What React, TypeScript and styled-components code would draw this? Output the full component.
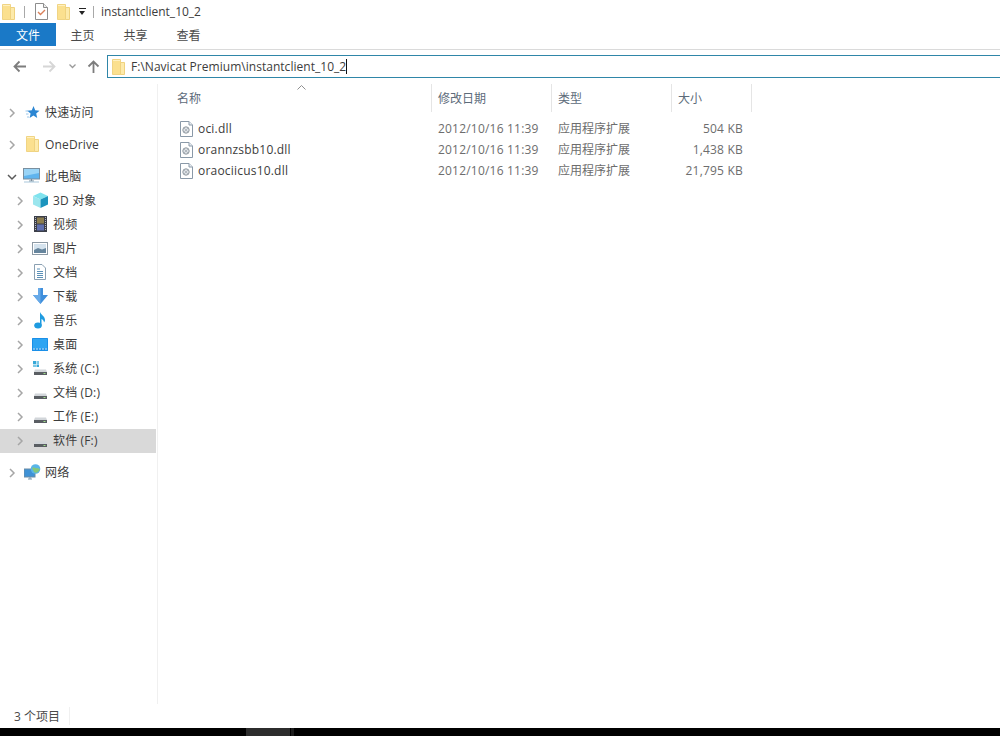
import React from "react";
import styled, { createGlobalStyle } from "styled-components";

const GlobalStyle = createGlobalStyle`
  html, body {
    margin: 0;
    padding: 0;
    background: #fff;
  }
  * {
    box-sizing: border-box;
  }
`;

const FONT = `"Open Sans", "Noto Sans CJK SC", sans-serif`;

const Folder = () => (
  <svg width="13" height="16" viewBox="0 0 13 16">
    <path d="M.5.5h8v15h-8z" fill="#fbe08f" stroke="#f0d484" />
    <path d="M8.500 3.500h4v12h-4z" fill="#fdeaaa" stroke="#efd27f" />
    <path d="M1 1h7v1H1z" fill="#fff0bf" />
  </svg>
);

const Chevron = ({ open }: { open?: boolean }) => (
  <svg width="10" height="10" viewBox="0 0 10 10">
    <path
      d={open ? "M1 3l4 4 4-4" : "M3 1l4 4-4 4"}
      fill="none"
      stroke={open ? "#5a5a5a" : "#a6a6a6"}
      strokeWidth="1.5"
    />
  </svg>
);

const Arrow = ({ dir, color }: { dir: "left" | "right" | "up"; color: string }) => {
  const d =
    dir === "left"
      ? "M13 6.500H1.500M6.500 1.500l-5 5 5 5"
      : dir === "right"
        ? "M0 6.500h11.500M6.500 1.500l5 5-5 5"
        : "M6.500 13V1.500M1.500 6.500l5-5 5 5";
  return (
    <svg width="13" height="13" viewBox="0 0 13 13">
      <path d={d} fill="none" stroke={color} strokeWidth="1.800" />
    </svg>
  );
};

const CheckDoc = () => (
  <svg width="13" height="17" viewBox="0 0 13 17">
    <path d="M.5.5h8l4 4v12H.5z" fill="#fff" stroke="#8d8d8d" />
    <path d="M8.500.5v4h4" fill="#eee" stroke="#8d8d8d" />
    <path d="M3 9l2.500 2.500L10 7" fill="none" stroke="#d9805a" strokeWidth="1.400" />
  </svg>
);

const DllIcon = () => (
  <svg width="13" height="16" viewBox="0 0 13 16">
    <path d="M.5.5h8.500l3.500 3.500v11.500H.5z" fill="#fff" stroke="#8a99a8" />
    <path d="M9 .5V4h3.500" fill="#e8edf2" stroke="#8a99a8" />
    <circle cx="6" cy="9" r="3.200" fill="#dfe3e7" stroke="#8f98a0" />
    <path d="M4 7l4 4M4 11l4-4" stroke="#a7afb6" strokeWidth=".8" />
  </svg>
);

const StarIcon = () => (
  <svg width="15" height="15" viewBox="0 0 15 15">
    <path d="M8.500 1l1.700 4.300 4.300.4-3.300 2.900 1 4.400-3.800-2.400L4.600 13l1-4.400L2.200 5.700l4.600-.4z" fill="#2b86d3" />
    <path d="M.5 6h3M1 9h2.500M2 12h2" stroke="#9ac6ea" strokeWidth="1" />
  </svg>
);

const PcIcon = () => (
  <svg width="18" height="16" viewBox="0 0 18 16">
    <rect x=".5" y=".5" width="16" height="10.500" fill="#5fb4ee" stroke="#7a8f9f" />
    <path d="M1 1h15v4L1 8z" fill="#9ad4f6" />
    <path d="M6 13h5M8.500 11v2" stroke="#7a8f9f" strokeWidth="1.200" />
    <path d="M1 14h15" stroke="#a9c7db" strokeWidth="1" />
  </svg>
);

const CubeIcon = () => (
  <svg width="17" height="17" viewBox="0 0 17 17">
    <path d="M1 4l7.500-3.500L16 4l-7.500 3.500z" fill="#7fe3ee" />
    <path d="M1 4l7.500 3.500V16L1 12.500z" fill="#9be6ee" />
    <path d="M16 4L8.500 7.500V16L16 12.500z" fill="#1b94bd" />
  </svg>
);

const FilmIcon = () => (
  <svg width="13" height="16" viewBox="0 0 13 16">
    <rect width="13" height="16" fill="#3c3f49" />
    <rect x="3" y="1.500" width="7" height="6" fill="#8b7d4f" />
    <rect x="3" y="8.500" width="7" height="6" fill="#5f6fb0" />
    <path d="M1.500 1v14M11.500 1v14" stroke="#b9bcc4" strokeWidth="1" strokeDasharray="1 1" />
  </svg>
);

const PictureIcon = () => (
  <svg width="16" height="13" viewBox="0 0 16 13">
    <rect x=".5" y=".5" width="15" height="12" fill="#fff" stroke="#8d9aa5" />
    <rect x="2" y="2" width="12" height="9" fill="#d5e3ee" />
    <path d="M2 8l4-2 4 1.500L14 6v5H2z" fill="#66859d" />
  </svg>
);

const DocIcon = () => (
  <svg width="12" height="16" viewBox="0 0 12 16">
    <path d="M.5.5H8L11.500 4v11.500H.5z" fill="#fff" stroke="#8aa0b2" />
    <path d="M3 5h3M3 7.500h6M3 9.500h6M3 11.500h6M3 13.500h6" stroke="#5b91b8" strokeWidth="1" />
  </svg>
);

const DownloadIcon = () => (
  <svg width="15" height="16" viewBox="0 0 15 16">
    <path d="M5 0h5v7h5l-7.500 9L0 7h5z" fill="#3f8fdc" />
    <path d="M5 0h2.500v16L0 7h5z" fill="#68aae8" />
  </svg>
);

const MusicIcon = () => (
  <svg width="12" height="18" viewBox="0 0 12 18">
    <ellipse cx="4" cy="14.500" rx="3.800" ry="3" fill="#1f9be0" />
    <path d="M6 14.500V1c1 3 5 4 5 8 0 1-.5 2-1 2.500 0-2-2-3.500-2.500-3.500v6.500z" fill="#1f9be0" />
  </svg>
);

const DesktopIcon = () => (
  <svg width="16" height="13" viewBox="0 0 16 13">
    <rect width="16" height="13" rx=".5" fill="#1a8fe8" />
    <rect x="1" y="1" width="14" height="9.500" fill="#2fa5f2" />
    <path d="M1 11h14" stroke="#cfe6f7" strokeWidth="1" strokeDasharray="2 1" />
  </svg>
);

const DriveIcon = ({ system }: { system?: boolean }) => (
  <svg width="15" height="15" viewBox="0 0 15 15">
    {system && (
      <>
        <rect x="0" y="0" width="3" height="3" fill="#35a8d8" />
        <rect x="3.500" y="0" width="2.500" height="3" fill="#7cc8e6" />
        <rect x="0" y="3.500" width="3" height="2.500" fill="#7cc8e6" />
        <rect x="3.500" y="3.500" width="2.500" height="2.500" fill="#35a8d8" />
      </>
    )}
    <path d="M2 8.500h11l1 2.500H1z" fill="#d2d6da" />
    <rect x="1" y="11" width="13" height="3" fill="#5a5e63" />
    <rect x="10.500" y="12" width="2" height="1" fill="#9fe08a" />
  </svg>
);

const NetIcon = () => (
  <svg width="17" height="16" viewBox="0 0 17 16">
    <rect x="0" y="5" width="11" height="8" fill="#3f92d6" stroke="#6b8ca6" />
    <path d="M4 15h4M6 13v2" stroke="#7b99ae" strokeWidth="1" />
    <circle cx="11.500" cy="5" r="4.800" fill="#58b4e8" />
    <path d="M8 4c2-2 3 1 5 0 1 0 2 1 3 1-1 3-4 5-6 3z" fill="#84c77c" />
  </svg>
);

type NavEntry = {
  label: string;
  icon: React.ReactNode;
  child?: boolean;
  open?: boolean;
  selected?: boolean;
  gapBefore?: boolean;
};

const NAV: NavEntry[] = [
  { label: "快速访问", icon: <StarIcon /> },
  { label: "OneDrive", icon: <Folder />, gapBefore: true },
  { label: "此电脑", icon: <PcIcon />, open: true, gapBefore: true },
  { label: "3D 对象", icon: <CubeIcon />, child: true },
  { label: "视频", icon: <FilmIcon />, child: true },
  { label: "图片", icon: <PictureIcon />, child: true },
  { label: "文档", icon: <DocIcon />, child: true },
  { label: "下载", icon: <DownloadIcon />, child: true },
  { label: "音乐", icon: <MusicIcon />, child: true },
  { label: "桌面", icon: <DesktopIcon />, child: true },
  { label: "系统 (C:)", icon: <DriveIcon system />, child: true },
  { label: "文档 (D:)", icon: <DriveIcon />, child: true },
  { label: "工作 (E:)", icon: <DriveIcon />, child: true },
  { label: "软件 (F:)", icon: <DriveIcon />, child: true, selected: true },
  { label: "网络", icon: <NetIcon />, gapBefore: true },
];

const FILES = [
  { name: "oci.dll", size: "504 KB" },
  { name: "orannzsbb10.dll", size: "1,438 KB" },
  { name: "oraociicus10.dll", size: "21,795 KB" },
];

const App = () => {
  return (
    <>
      <GlobalStyle />
      <Window>
        <TitleBar>
          <Folder />
          <QuickSep />
          <CheckSlot>
            <CheckDoc />
          </CheckSlot>
          <Folder />
          <DropGlyph />
          <QuickSep />
          <TitleText>instantclient_10_2</TitleText>
        </TitleBar>

        <Tabs>
          <FileTab>文件</FileTab>
          <Tab>主页</Tab>
          <Tab>共享</Tab>
          <Tab>查看</Tab>
        </Tabs>

        <AddressRow>
          <NavButtons>
            <NavSlot $ml={0}>
              <Arrow dir="left" color="#7d7d7d" />
            </NavSlot>
            <NavSlot $ml={17}>
              <Arrow dir="right" color="#d6d6d6" />
            </NavSlot>
            <NavSlot $ml={13}>
              <svg width="7" height="5" viewBox="0 0 7 5">
                <path d="M.5.5l3 3 3-3" fill="none" stroke="#9a9a9a" strokeWidth="1.300" />
              </svg>
            </NavSlot>
            <NavSlot $ml={11}>
              <Arrow dir="up" color="#7d7d7d" />
            </NavSlot>
          </NavButtons>
          <AddressBox>
            <Folder />
            <AddressText>F:\Navicat Premium\instantclient_10_2</AddressText>
            <Caret />
          </AddressBox>
        </AddressRow>

        <Main>
          <Sidebar>
            {NAV.map((item) => (
              <NavRow key={item.label} $selected={item.selected} $gap={item.gapBefore}>
                <NavChevron $child={item.child}>
                  <Chevron open={item.open} />
                </NavChevron>
                <NavIcon $child={item.child}>{item.icon}</NavIcon>
                <NavLabel>{item.label}</NavLabel>
              </NavRow>
            ))}
          </Sidebar>

          <Content>
            <SortCaret>
              <svg width="9" height="5" viewBox="0 0 9 5">
                <path d="M.5 4.500l4-4 4 4" fill="none" stroke="#8f8f8f" strokeWidth="1" />
              </svg>
            </SortCaret>
            <Header>
              <HeadCell $w={273} $pad={18}>名称</HeadCell>
              <HeadCell $w={120}>修改日期</HeadCell>
              <HeadCell $w={120}>类型</HeadCell>
              <HeadCell $w={80}>大小</HeadCell>
            </Header>
            <FileList>
              {FILES.map((f) => (
                <FileRow key={f.name}>
                  <NameCell>
                    <DllIcon />
                    <FileName>{f.name}</FileName>
                  </NameCell>
                  <MutedCell $w={120}>2012/10/16 11:39</MutedCell>
                  <TypeCell $w={120}>应用程序扩展</TypeCell>
                  <SizeCell>{f.size}</SizeCell>
                </FileRow>
              ))}
            </FileList>
          </Content>
        </Main>

        <StatusBar>
          <StatusText>3 个项目</StatusText>
        </StatusBar>
        <Taskbar>
          <TaskChunk />
          <TaskSliver />
        </Taskbar>
      </Window>
    </>
  );
};

export default App;

const Window = styled.div`
  width: 1000px;
  height: 736px;
  overflow: hidden;
  display: flex;
  flex-direction: column;
  background: #fff;
  font-family: ${FONT};
  font-size: 12px;
  color: #3a3a3a;
`;

const TitleBar = styled.div`
  height: 23px;
  flex: none;
  display: flex;
  align-items: center;
  padding-left: 2px;
  gap: 9px;
`;

const QuickSep = styled.span`
  width: 1px;
  height: 12px;
  background: #a8a8a8;
`;

const CheckSlot = styled.span`
  display: flex;
  margin-left: 1px;
`;

const DropGlyph = styled.span`
  width: 7px;
  height: 7px;
  margin-right: -2px;
  border-top: 1px solid #222;
  position: relative;
  &::after {
    content: "";
    position: absolute;
    left: 0;
    top: 2px;
    border-left: 3.5px solid transparent;
    border-right: 3.5px solid transparent;
    border-top: 4px solid #222;
  }
`;

const TitleText = styled.span`
  font-size: 12px;
  color: #3c3c3c;
  margin-left: -2px;
`;

const Tabs = styled.div`
  height: 23px;
  flex: none;
  display: flex;
  align-items: stretch;
`;

const FileTab = styled.div`
  width: 56px;
  background: #1a79c7;
  color: #fff;
  display: flex;
  align-items: center;
  justify-content: center;
  font-size: 12px;
`;

const Tab = styled.div`
  width: 53px;
  display: flex;
  align-items: center;
  justify-content: center;
  font-size: 12px;
  color: #4a4a4a;
`;

const AddressRow = styled.div`
  height: 35px;
  flex: none;
  margin-top: 3px;
  border-top: 1px solid #dadada;
  display: flex;
  align-items: flex-start;
  padding-top: 5px;
`;

const NavButtons = styled.div`
  width: 107px;
  height: 22px;
  flex: none;
  display: flex;
  align-items: center;
  padding-left: 13px;
`;

const NavSlot = styled.span<{ $ml: number }>`
  display: flex;
  margin-left: ${(p) => p.$ml}px;
`;

const AddressBox = styled.div`
  flex: 1;
  height: 23px;
  border: 1px solid #2f86a8;
  border-right: none;
  display: flex;
  align-items: center;
  padding-left: 4px;
`;

const AddressText = styled.span`
  margin-left: 6px;
  font-size: 12px;
  letter-spacing: 0.03px;
  color: #3c3c3c;
  white-space: nowrap;
`;

const Caret = styled.span`
  width: 1px;
  height: 15px;
  background: #111;
`;

const Main = styled.div`
  flex: 1;
  display: flex;
  min-height: 0;
`;

const Sidebar = styled.div`
  width: 158px;
  flex: none;
  padding: 17px 1px 0 0;
  border-right: 1px solid #f0f0f0;
  margin-bottom: 1px;
`;

const NavRow = styled.div<{ $selected?: boolean; $gap?: boolean }>`
  height: 24px;
  display: flex;
  align-items: center;
  margin-top: ${(p) => (p.$gap ? "8px" : "0")};
  background: ${(p) => (p.$selected ? "#d9d9d9" : "transparent")};
`;

const NavChevron = styled.span<{ $child?: boolean }>`
  display: flex;
  margin-left: ${(p) => (p.$child ? "15px" : "7px")};
  width: 10px;
`;

const NavIcon = styled.span<{ $child?: boolean }>`
  width: 18px;
  height: 18px;
  margin-left: 6px;
  margin-bottom: 2px;
  display: flex;
  align-items: center;
  justify-content: center;
`;

const NavLabel = styled.span`
  margin-left: 4px;
  margin-bottom: 2px;
  font-size: 12px;
  letter-spacing: 0.15px;
  color: #3c3c3c;
  white-space: nowrap;
`;

const Content = styled.div`
  flex: 1;
  position: relative;
  min-width: 0;
  padding-left: 1px;
`;

const SortCaret = styled.span`
  position: absolute;
  left: 139px;
  top: 1px;
  display: flex;
`;

const Header = styled.div`
  height: 28px;
  display: flex;
`;

const HeadCell = styled.div<{ $w: number; $pad?: number }>`
  width: ${(p) => p.$w}px;
  padding-left: ${(p) => p.$pad ?? 6}px;
  display: flex;
  align-items: center;
  border-right: 1px solid #e5e5e5;
  font-size: 12px;
  color: #5d6b7a;
`;

const FileList = styled.div`
  padding-top: 6px;
`;

const FileRow = styled.div`
  height: 21px;
  display: flex;
  align-items: center;
`;

const NameCell = styled.div`
  width: 273px;
  padding-left: 21px;
  display: flex;
  align-items: center;
  gap: 5px;
`;

const FileName = styled.span`
  font-size: 12px;
  letter-spacing: 0.2px;
  color: #3c3c3c;
`;

const MutedCell = styled.div<{ $w: number }>`
  width: ${(p) => p.$w}px;
  padding-left: 6px;
  font-size: 12px;
  letter-spacing: 0.2px;
  color: #6d6d6d;
  white-space: nowrap;
`;

const TypeCell = styled(MutedCell)`
  margin-bottom: 2px;
  letter-spacing: 0;
`;

const SizeCell = styled.div`
  width: 71px;
  text-align: right;
  font-size: 12px;
  letter-spacing: 0.2px;
  color: #6d6d6d;
  white-space: nowrap;
`;

const StatusBar = styled.div`
  height: 23px;
  flex: none;
  display: flex;
  align-items: center;
  padding: 0 0 1px 14px;
`;

const StatusText = styled.span`
  font-size: 12px;
  color: #4a4a4a;
  padding-right: 9px;
  border-right: 1px solid #f0f0f0;
`;

const Taskbar = styled.div`
  height: 8px;
  flex: none;
  background: #000;
  display: flex;
  padding-left: 246px;
`;

const TaskChunk = styled.div`
  width: 44px;
  background: #2c2c2c;
`;

const TaskSliver = styled.div`
  width: 3px;
  margin-left: 1px;
  background: #1c1c1c;
`;
